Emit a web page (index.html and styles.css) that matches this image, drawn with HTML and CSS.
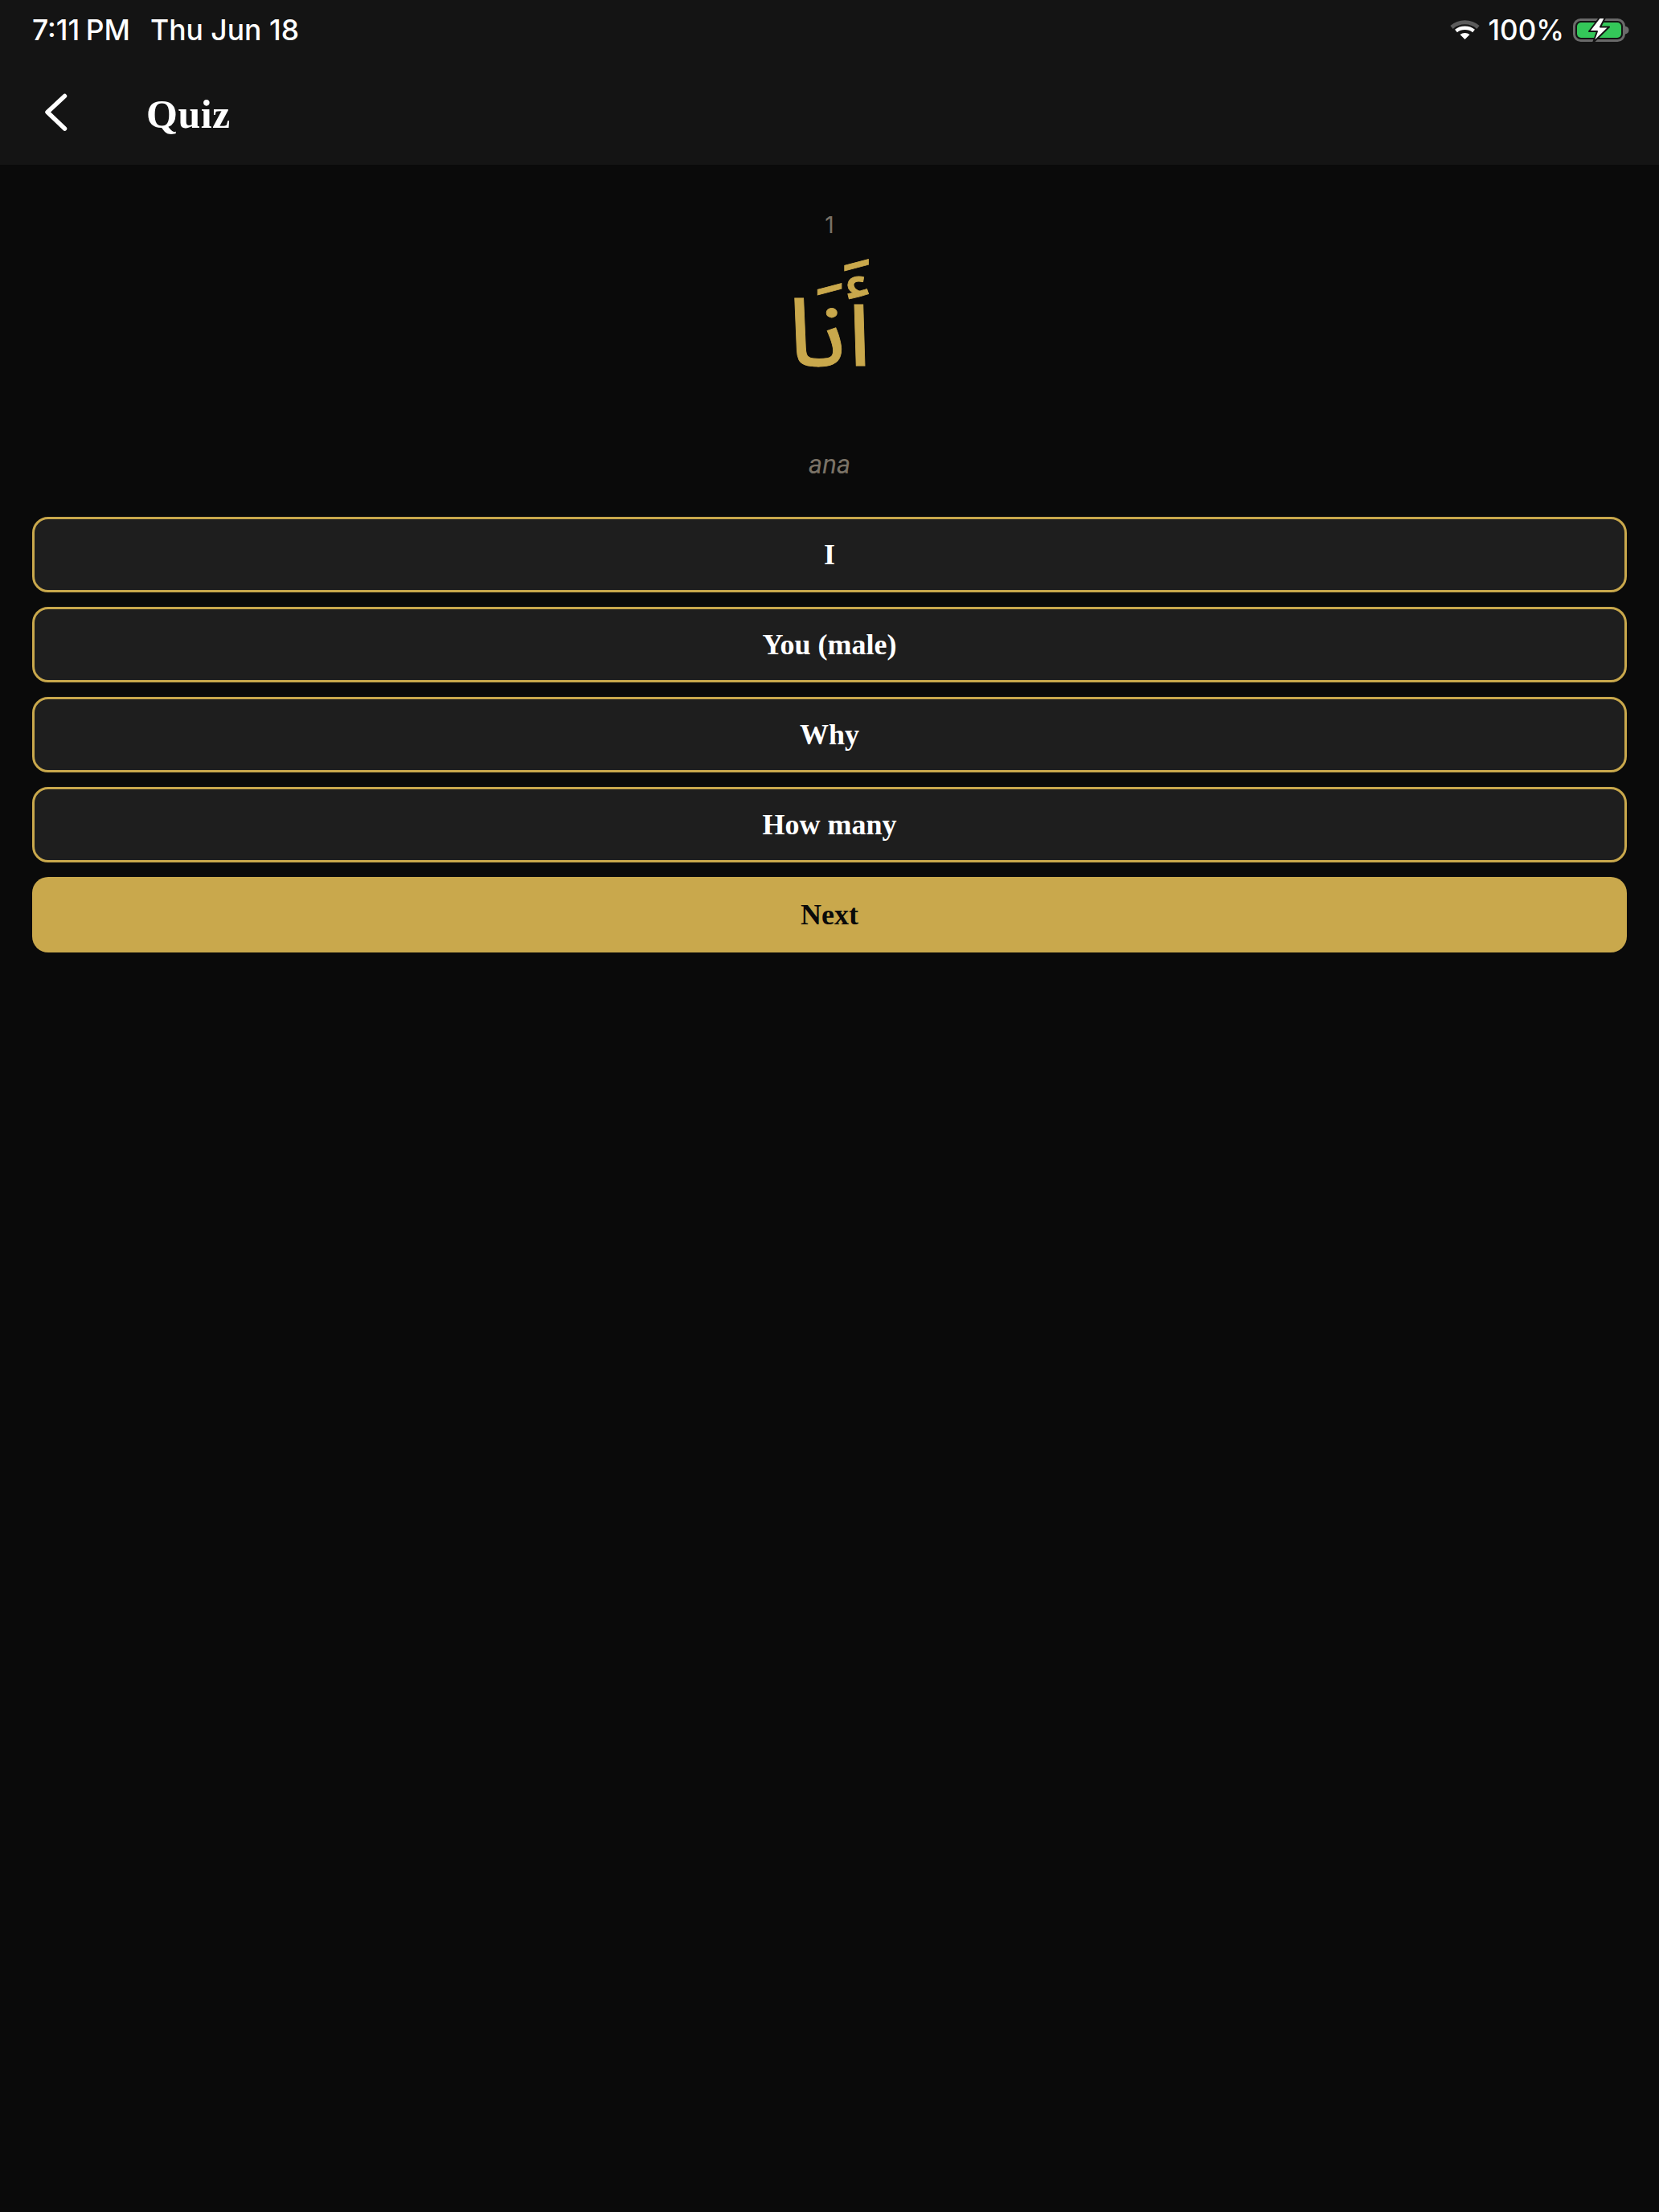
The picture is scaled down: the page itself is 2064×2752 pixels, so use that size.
FILE: index.html
```html
<!DOCTYPE html>
<html lang="en">
<head>
<meta charset="utf-8">
<title>Quiz</title>
<link rel="stylesheet" href="styles.css">
</head>
<body>
<header class="top">
  <div class="status">
    <div class="status-left"><span class="time">7:11 PM</span><span class="date">Thu Jun 18</span></div>
    <div class="status-right">
      <svg class="wifi" width="37" height="24" viewBox="0 0 37 24">
        <path d="M2 9C11.500 .8 25.500 .8 35 9" fill="none" stroke="#5c5c5c" stroke-width="5"/>
        <path d="M7.500 13.500C13.500 8.500 23.500 8.500 29.500 13.500" fill="none" stroke="#fff" stroke-width="4.500"/>
        <path d="M12.500 18C16 15.200 21 15.200 24.500 18L18.500 24Z" fill="#fff"/>
      </svg>
      <span class="pct">100%</span>
      <svg class="battery" width="70" height="33" viewBox="0 0 70 33">
        <rect x="1.500" y="3.500" width="62" height="26" rx="8" fill="none" stroke="#6a6a6a" stroke-width="3"/>
        <rect x="5" y="7" width="55" height="19" rx="5" fill="#34c759"/>
        <path d="M65 11.500c3 .6 4.500 2.600 4.500 5s-1.500 4.400-4.500 5Z" fill="#6a6a6a"/>
        <path d="M33 1L20 18H30L25 32L45 12.500H34L40 1Z" fill="#fff" stroke="#141414" stroke-width="2" stroke-linejoin="round"/>
      </svg>
    </div>
  </div>
  <div class="nav">
    <svg class="back" width="32" height="48" viewBox="0 0 32 48">
      <path d="M26.500 3.500L5 23.500L26.500 44" fill="none" stroke="#fff" stroke-width="5.500" stroke-linecap="round" stroke-linejoin="round"/>
    </svg>
    <h1 class="title">Quiz</h1>
  </div>
</header>
<main class="content">
  <div class="index">1</div>
  <div class="arabic" lang="ar" dir="rtl">أَنَا</div>
  <div class="translit">ana</div>
  <div class="options">
    <button class="option">I</button>
    <button class="option">You (male)</button>
    <button class="option">Why</button>
    <button class="option">How many</button>
    <button class="next">Next</button>
  </div>
</main>
</body>
</html>
```
FILE: styles.css
```css
* { box-sizing: border-box; }
html, body { margin: 0; height: 100%; }
body { background: #0a0a0a; color: #fff; font-family: "Inter", "Liberation Sans", sans-serif; }
.top { background: #141414; height: 205px; padding: 0 37px 0 40px; }
.status { display: flex; justify-content: space-between; align-items: center; height: 74px; }
.status-left { display: flex; gap: 25px; font-size: 35.5px; font-weight: 500; color: #fff; }
.time { word-spacing: -2px; }
.status-right { display: flex; align-items: center; gap: 11px; font-size: 35px; }
.pct { font-weight: 500; }
.nav { display: flex; align-items: center; height: 131px; }
.back { margin-left: 14px; flex: none; }
.title { margin: 0 0 0 96px; padding-top: 4px; font: 700 50px "Liberation Serif", serif; letter-spacing: .5px; }
.content { padding: 0 40px; display: flex; flex-direction: column; align-items: center; }
.index { margin-top: 57px; height: 36px; line-height: 36px; font-size: 28px; color: #7a7266; }
.arabic { margin-top: 40px; height: 160px; line-height: 160px; font-family: "Noto Sans Arabic", "Noto Naskh Arabic", "Noto Sans", sans-serif; font-size: 118px; color: #c9a84c; -webkit-text-stroke: .8px #c9a84c; transform: scaleX(1.12); }
.translit { margin-top: 60px; height: 40px; line-height: 40px; font-family: "Roboto", sans-serif; font-size: 33px; font-style: italic; color: #7a7266; }
.options { margin-top: 45px; width: 100%; display: flex; flex-direction: column; gap: 18px; }
.option, .next { display: block; width: 100%; height: 94px; border-radius: 20px; font: 700 36px "Liberation Serif", serif; padding: 0; }
.option { background: #1e1e1e; border: 3px solid #c9a84c; color: #fff; }
.next { background: #c9a84c; border: 0; color: #0a0a0a; }
```
